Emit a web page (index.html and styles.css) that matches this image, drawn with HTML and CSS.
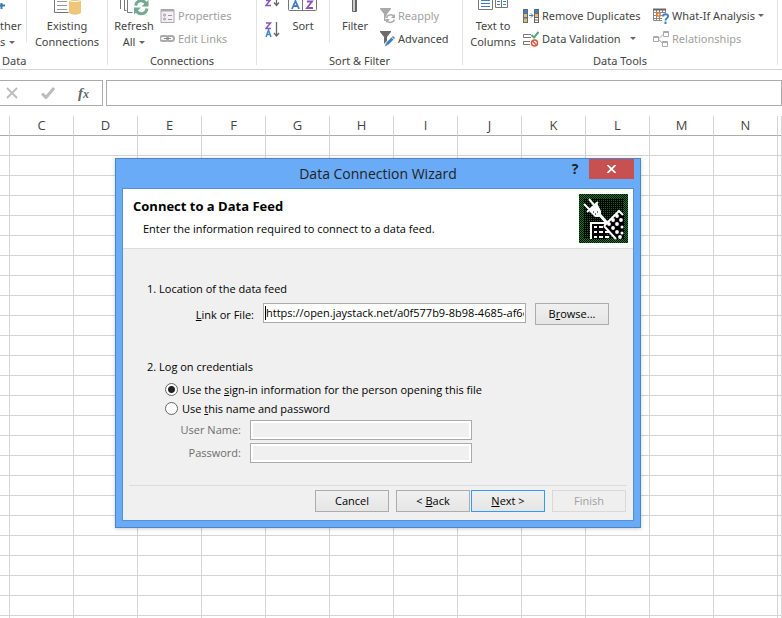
FILE: index.html
```html
<!DOCTYPE html>
<html lang="en">
<head>
<meta charset="utf-8">
<title>Data Connection Wizard</title>
<link rel="stylesheet" href="styles.css">
</head>
<body>
<div class="ribbon">
  <section class="group group-get">
    <div class="tools">
      <button class="big big-cut">
        <svg class="icon-top" width="24" height="18" viewBox="0 0 24 18"><path d="M0 5.500h5M1.500 3v6" stroke="#3f76b5" stroke-width="2"/></svg>
        <span>ther</span><span>s<i class="caret"></i></span>
      </button>
      <div class="divider"></div>
      <button class="big big-existing">
        <svg class="icon-top" width="28" height="18" viewBox="0 0 28 18"><path d="M1.500 0v12.500h14" fill="none" stroke="#777"/><path d="M4 1.500h10M4 5.500h10M4 9.500h10" stroke="#999"/><path d="M16 0h12v12c0 3.500-12 3.500-12 0z" fill="#edc67c"/><path d="M16 0c2 2 10 2 12 0" fill="none" stroke="#fff"/></svg>
        <span>Existing</span><span>Connections</span>
      </button>
    </div>
    <h2>Data</h2>
  </section>
  <section class="group group-connections">
    <div class="tools">
      <button class="big big-refresh">
        <svg class="icon-top" width="30" height="18" viewBox="0 0 30 18"><path d="M1.500 0v9M5.500 0v10.500h2M8.500 0v12.500h5" fill="none" stroke="#777"/><path d="M16.500 5.500c1-5 8-7 11-1M28 8.500c-1 6-8 7-11 2" fill="none" stroke="#73a893" stroke-width="3"/><path d="M29.500 0v6.500h-7zM15 14.500v-7h7z" fill="#73a893"/></svg>
        <span>Refresh</span><span>All<i class="caret"></i></span>
      </button>
      <div class="stack">
        <button class="small" disabled>
          <svg width="15" height="16" viewBox="0 0 15 16"><path d="M1 1.500h13v13h-13z" fill="#f3f0f3" stroke="#aaa"/><path d="M1 2.500h13" stroke="#aaa" stroke-width="2"/><circle cx="4.500" cy="7" r="1" fill="none" stroke="#999"/><circle cx="4.500" cy="11" r="1" fill="none" stroke="#999"/><path d="M8 7.500h4M8 11.500h4" stroke="#999"/></svg>
          Properties</button>
        <button class="small" disabled>
          <svg width="15" height="16" viewBox="0 0 15 16"><rect x="0" y="5" width="8" height="5" rx="2.500" fill="none" stroke="#aaa" stroke-width="2"/><rect x="7" y="5" width="7" height="5" rx="2.500" fill="none" stroke="#aaa" stroke-width="2"/><path d="M4 7.500h7" stroke="#888"/></svg>
          Edit Links</button>
      </div>
    </div>
    <h2>Connections</h2>
  </section>
  <section class="group group-sort">
    <div class="tools">
      <button class="orders" aria-label="Sort order">
        <svg width="16" height="42" viewBox="0 0 16 42"><path d="M1 0.500h4L1 5.500h5M1 23h4.500L1 28.500h5" fill="none" stroke="#8e55b5" stroke-width="1.500"/><path d="M1 37l2.500-7 2.500 7M2 34.500h3" fill="none" stroke="#3f8acb" stroke-width="1.500"/><path d="M11.500 0v5M9 2.500l2.500 3 2.500-3M11.500 22v14M9 33l2.500 3 2.500-3" fill="none" stroke="#666" stroke-width="1.300"/></svg>
      </button>
      <button class="big big-sort">
        <svg class="icon-top" width="30" height="18" viewBox="0 0 30 18"><path d="M.5 0v9.500q0 1 1 1h26q1 0 1-1V0M14.500 0v10" fill="none" stroke="#777"/><path d="M4 9l3.500-8 3.500 8M5 6h5" fill="none" stroke="#3f7fc0" stroke-width="1.800"/><path d="M19 1.500h5L19 8h6" fill="none" stroke="#8e55b5" stroke-width="1.800"/></svg>
        <span>Sort</span>
      </button>
      <div class="divider"></div>
      <button class="big big-filter">
        <svg class="icon-top" width="6" height="18" viewBox="0 0 6 18"><path d="M.5 0v11.500h4V0" fill="#ccc" stroke="#666"/><path d="M4 0v11" stroke="#666" stroke-width="2"/></svg>
        <span>Filter</span>
      </button>
      <div class="stack">
        <button class="small" disabled>
          <svg width="15" height="16" viewBox="0 0 15 16"><path d="M0 0h11v1L7 6v7H4V6L0 1z" fill="#aaa"/><circle cx="10.500" cy="10.500" r="5" fill="#fff"/><path d="M6.500 10c1-4 6-4 8-1M14.500 11.500c-1 3-5 4-7.500 1.500" fill="none" stroke="#aaa" stroke-width="1.500"/><path d="M15 6v4h-4zM6 15v-4h4z" fill="#aaa"/></svg>
          Reapply</button>
        <button class="small">
          <svg width="15" height="16" viewBox="0 0 15 16"><path d="M0 0h11v1L7 6v7H4V6L0 1z" fill="#6b6b6b"/><path d="M6 14.500l8-8.500" stroke="#fff" stroke-width="5"/><path d="M7 13l5.500-5.500" stroke="#3f7fc0" stroke-width="3"/><path d="M13 7l1-1" stroke="#3f7fc0" stroke-width="3"/><path d="M5 15l1-3 2 2z" fill="#3f7fc0"/></svg>
          Advanced</button>
      </div>
    </div>
    <h2>Sort &amp; Filter</h2>
  </section>
  <section class="group group-tools">
    <div class="tools">
      <button class="big big-columns">
        <svg class="icon-top" width="30" height="18" viewBox="0 0 30 18"><path d="M.5 0v9.500h14V0M17.500 0v7.500h12V0M23.500 0v7" fill="none" stroke="#777"/><path d="M3 .5h9M3 3.500h9M3 6.500h9" stroke="#3f7fc0"/><path d="M19 1.500h3M25 1.500h3M19 4.500h3M25 4.500h3" stroke="#3f7fc0"/></svg>
        <span>Text to</span><span>Columns</span>
      </button>
      <div class="stack stack-data">
        <button class="small">
          <svg width="16" height="16" viewBox="0 0 16 16"><path d="M0 1h5v14H0z" fill="#596d83"/><path d="M1 6h3v3H1zM1 10.500h3v3.500H1z" fill="#edbb63"/><path d="M1 2h3v3H1z" fill="#3f7fc0"/><path d="M11 1h5v14h-5z" fill="#666"/><path d="M12 2h3v3h-3z" fill="#3f7fc0"/><path d="M12 6h3v3h-3z" fill="#edbb63"/><path d="M12 10h3v1.500h-3zM12 12.500h3V14h-3z" fill="#fff"/><path d="M6 7.500h4M8 5.500l2 2-2 2" fill="none" stroke="#3f7fc0"/></svg>
          Remove Duplicates</button>
        <button class="small">
          <svg width="16" height="16" viewBox="0 0 16 16"><path d="M8 3.500H.5v3H8M7 10.500H.5v3H7" fill="none" stroke="#777"/><path d="M8.500 4l2.500 2.500L15.500 1" fill="none" stroke="#58a583" stroke-width="2"/><circle cx="11.500" cy="12" r="3" fill="#fff" stroke="#d9583b" stroke-width="1.500"/><path d="M9.500 10l4 4" stroke="#d9583b" stroke-width="1.300"/></svg>
          Data Validation<i class="caret caret-far"></i></button>
      </div>
      <div class="stack">
        <button class="small">
          <svg width="16" height="16" viewBox="0 0 16 16"><path d="M.5 1.500h12v11H.5zM3.500 1v11M6.500 1v11M9.500 1v11M0 4.500h12M0 7.500h12M0 10.500h12" fill="#fff" stroke="#888"/><path d="M0 1.500h13" stroke="#666" stroke-width="2"/><path d="M4 5h3v3H4z" fill="#fff" stroke="#e37e33" stroke-width="1.500"/><path d="M9 5h7v11H9z" fill="#fff"/><path d="M10 8.500c0-3 5.500-3 5 0 0 2-2.500 1.500-2.500 4M12.500 13.500V16" fill="none" stroke="#3f7fc0" stroke-width="2"/></svg>
          What-If Analysis<i class="caret caret-near"></i></button>
        <button class="small" disabled>
          <svg width="16" height="16" viewBox="0 0 16 16"><path d="M.5 5.500h5v5h-5zM10.500.5h5v5h-5zM9.500 10.500h5v5h-5zM6 7.500l4-4M6 8.500l3.500 4" fill="none" stroke="#aaa"/><path d="M0 6.500h6M10 1.500h6M9 11.500h6" stroke="#aaa"/></svg>
          Relationships</button>
      </div>
    </div>
    <h2>Data Tools</h2>
  </section>
</div>

<div class="formula-bar">
  <div class="formula-actions">
    <button aria-label="Cancel entry"><svg width="12" height="12" viewBox="0 0 12 12"><path d="M1 1l10 10M11 1L1 11" stroke="#bdbdbd" stroke-width="2"/></svg></button>
    <button aria-label="Enter"><svg width="14" height="12" viewBox="0 0 14 12"><path d="M1 6.500l4 4L13 1" fill="none" stroke="#bdbdbd" stroke-width="3"/></svg></button>
    <button class="fx" aria-label="Insert function">f<small>x</small></button>
  </div>
  <input class="formula-input" type="text" aria-label="Formula">
</div>

<table class="sheet">
  <thead>
    <tr><th class="edge"></th><th>C</th><th>D</th><th>E</th><th>F</th><th>G</th><th>H</th><th>I</th><th>J</th><th>K</th><th>L</th><th>M</th><th>N</th><th class="rest"></th></tr>
  </thead>
  <tbody id="rows"></tbody>
</table>

<div class="dialog" role="dialog" aria-labelledby="dialog-title">
  <header class="titlebar">
    <h1 id="dialog-title">Data Connection Wizard</h1>
    <div class="window-buttons">
      <button class="help" aria-label="Help">?</button>
      <button class="close" aria-label="Close"><svg width="9" height="8" viewBox="0 0 9 8"><path d="M.5 0l8 8M8.500 0l-8 8" stroke="#fff" stroke-width="1.700"/></svg></button>
    </div>
  </header>
  <form class="panel">
    <div class="intro">
      <div>
        <h2>Connect to a Data Feed</h2>
        <p>Enter the information required to connect to a data feed.</p>
      </div>
      <svg class="feed-icon" width="49" height="49" viewBox="0 0 49 49">
        <defs>
          <pattern id="dense" width="2" height="2" patternUnits="userSpaceOnUse"><path d="M0 0h2v2H0z" fill="#000"/><path d="M0 0h1v1H0zM1 1h1v1H1z" fill="#0a7a1c"/></pattern>
          <pattern id="sparse" width="2" height="2" patternUnits="userSpaceOnUse"><path d="M0 0h2v2H0z" fill="#000"/><path d="M0 0h1v1H0z" fill="#08621a"/></pattern>
        </defs>
        <path d="M0 0h49v49H0z" fill="url(#dense)"/>
        <path d="M5 5h39v40H5z" fill="url(#sparse)"/>
        <path d="M12 29h15v16H12z" fill="#000"/>
        <path d="M11 45V28h17v2H13v15z" fill="#fff"/>
        <path d="M15 32h3v2h-3zM20 32h4v2h-4zM15 37h3v2h-3zM20 37h4v2h-4zM26 37h4v2h-4zM15 42h3v2h-3zM20 42h4v2h-4zM26 42h4v2h-4z" fill="#fff"/>
        <path d="M25 31l15-14 5 4v24h-8z" fill="#000"/>
        <path d="M25 32L40 17l4 4M25 32l12 13" fill="none" stroke="#fff" stroke-width="2"/>
        <g fill="#fff"><circle cx="38" cy="22" r="1.900"/><circle cx="42" cy="26" r="1.900"/><circle cx="34" cy="26" r="1.900"/><circle cx="38" cy="30" r="1.900"/><circle cx="43" cy="33" r="1.500"/><circle cx="30" cy="30" r="1.900"/><circle cx="34" cy="34" r="1.900"/><circle cx="38" cy="38" r="1.900"/><circle cx="43" cy="39" r="1.500"/><circle cx="41" cy="43" r="1.900"/></g>
        <path d="M10 5l5 6M5 10l6 6M8 18L19 8" fill="none" stroke="#fff" stroke-width="2"/>
        <path d="M10 17l8-8 4 8v4l-2 2h-4z" fill="#fff"/>
        <path d="M20 20l8 9" fill="none" stroke="#fff" stroke-width="3"/>
        <path d="M14 18h1M16 20h1M18 18h1" stroke="#000"/>
      </svg>
    </div>
    <div class="content">
      <h3>1. Location of the data feed</h3>
      <div class="location">
        <label for="link"><u>L</u>ink or File:</label>
        <div class="link-box"><span class="text-caret"></span><input id="link" type="text" value="https://open.jaystack.net/a0f577b9-8b98-4685-af6e-2f5d"></div>
        <button type="button" class="push">B<u>r</u>owse...</button>
      </div>
      <h3 class="second">2. Log on credentials</h3>
      <label class="choice"><input type="radio" name="login" checked><span>Use the <u>s</u>ign-in information for the person opening this file</span></label>
      <label class="choice"><input type="radio" name="login"><span>Use <u>t</u>his name and password</span></label>
      <div class="credentials">
        <label for="user">User Name:</label><input id="user" type="text" disabled>
        <label for="pass">Password:</label><input id="pass" type="password" disabled>
      </div>
      <footer class="actions">
        <button type="button" class="push">Cancel</button>
        <div class="steps">
          <button type="button" class="push">&lt; <u>B</u>ack</button>
          <button type="button" class="push primary"><u>N</u>ext &gt;</button>
        </div>
        <button type="button" class="push" disabled>Finish</button>
      </footer>
    </div>
  </form>
</div>
<script src="sheet.js"></script>
</body>
</html>
```
FILE: styles.css
```css
* { box-sizing: border-box; }

body {
  margin: 0;
  min-height: 100vh;
  overflow: hidden;
  position: relative;
  background: #fff;
  color: #444;
  font: 11px/16px "Open Sans", "Noto Sans", sans-serif;
}

button, input { font: inherit; color: inherit; margin: 0; }
h1, h2, h3, p { margin: 0; font-size: inherit; font-weight: normal; }
svg { display: block; flex: none; }

/* Ribbon */
.ribbon {
  display: flex;
  height: 70px;
  border-bottom: 1px solid #d4d4d4;
  font-family: "Noto Sans", "Open Sans", sans-serif;
}
.ribbon button {
  border: 0;
  padding: 0;
  background: none;
  white-space: nowrap;
}
.ribbon button:disabled { color: #a0a0a0; }
.group {
  flex: none;
  height: 65px;
  border-right: 1px solid #e1e1e1;
}
.group-get { width: 108px; }
.group-connections { width: 149px; }
.group-sort { width: 206px; }
.group-tools { width: 315px; }
.group h2 { text-align: center; line-height: 16px; margin-top: 3px; }
.group-get h2 { text-align: left; padding-left: 2px; }
.tools { display: flex; height: 50px; }
.divider { width: 1px; height: 42px; background: #e1e1e1; }

.big {
  display: flex;
  flex-direction: column;
  align-items: center;
}
.icon-top { height: 18px; }
.big-cut { width: 26px; align-items: flex-start; }
.big-existing { width: 80px; }
.big-refresh { width: 52px; }
.big-sort { width: 44px; margin-right: 4px !important; }
.big-filter { width: 50px; }
.big-columns { width: 60px; }
.orders { width: 24px; padding-left: 8px !important; align-self: flex-start; }

.caret {
  display: inline-block;
  margin-left: 4px;
  vertical-align: 2px;
  border: 3px solid transparent;
  border-top-color: #666;
  border-bottom: 0;
}
.caret-far { margin-left: 6px; }
.caret-near { margin-left: 0; }

.stack { display: flex; flex-direction: column; padding-top: 4px; }
.stack-data { width: 130px; }
.small {
  display: flex;
  align-items: center;
  gap: 3px;
  height: 23px;
}

/* Formula bar */
.formula-bar { display: flex; gap: 3px; margin-top: 10px; height: 26px; }
.formula-actions {
  display: flex;
  align-items: center;
  gap: 23px;
  width: 103px;
  padding-left: 6px;
  border: 1px solid #ababab;
  border-left: 0;
}
.formula-actions button { border: 0; padding: 0; background: none; }
.formula-actions .fx {
  font: italic bold 15px/20px "Liberation Serif", serif;
  color: #666;
}
.fx small { font-size: 12px; }
.formula-input { flex: 1; min-width: 0; border: 1px solid #ababab; }

/* Sheet */
.sheet {
  width: 100%;
  margin-top: 10px;
  table-layout: fixed;
  border-collapse: separate;
  border-spacing: 0;
}
.sheet th, .sheet td { padding: 0; height: 20px; border-right: 1px solid #d4d4d4; }
.sheet th {
  width: 64px;
  border-bottom: 1px solid #ababab;
  font-size: 13px;
  line-height: 19px;
  font-weight: normal;
}
.sheet td { border-bottom: 1px solid #d4d4d4; }
.sheet .edge { width: 10px; }
.sheet .rest { width: auto; }

/* Wizard window */
.dialog {
  position: absolute;
  left: 115px;
  top: 158px;
  width: 526px;
  padding: 0 6px 6px;
  border: 1px solid #4c84c4;
  background: #6aabf7;
  box-shadow: 0 1px 4px rgba(0, 0, 0, .2);
  color: #000;
}
.titlebar { position: relative; height: 29px; }
.titlebar h1 {
  text-align: center;
  font-size: 14px;
  line-height: 29px;
  color: #222;
}
.window-buttons { position: absolute; top: 0; right: 0; display: flex; }
.window-buttons button { height: 20px; border: 0; padding: 0; background: none; }
.help { width: 28px; font-size: 14px; line-height: 20px; font-weight: bold; color: #222; }
.window-buttons .help { font-size: 14px; font-weight: bold; }
.window-buttons .close {
  display: flex;
  align-items: center;
  justify-content: center;
  width: 45px;
  background: #c75050;
}
.panel { border: 1px solid #5590d8; background: #f0f0f0; }
.intro {
  display: flex;
  justify-content: space-between;
  height: 60px;
  padding: 5px 5px 5px 10px;
  border-bottom: 1px solid #dcdcdc;
  background: #fff;
}
.intro h2 { font-size: 13px; line-height: 24px; font-weight: bold; }
.intro p { padding-left: 10px; line-height: 22px; }

.content { padding: 32px 6px 8px; }
.content h3 { padding-left: 18px; line-height: 16px; }
.location {
  display: flex;
  align-items: flex-start;
  padding-top: 6px;
}
.location label { width: 125px; text-align: right; line-height: 24px; }
.link-box {
  display: flex;
  align-items: center;
  width: 263px;
  height: 20px;
  margin: 0 9px;
  padding: 0 1px;
  border: 1px solid #ababab;
  background: #fff;
}
.link-box input { flex: 1; min-width: 0; border: 0; padding: 0; background: none; outline: 0; }
.text-caret { width: 1px; height: 14px; background: #000; }
.push {
  width: 74px;
  height: 22px;
  padding: 0;
  border: 1px solid #acacac;
  background: linear-gradient(#f0f0f0, #e5e5e5);
  line-height: 20px;
}
.push.primary { border-color: #3399ff; }
.push:disabled { border-color: #d9d9d9; background: #efefef; color: #a0a0a0; }
.content .second { padding-top: 32px; }
.second + .choice { margin-top: 5px; }
.choice {
  display: flex;
  align-items: center;
  gap: 4px;
  height: 19px;
  padding-left: 36px;
}
.choice input {
  appearance: none;
  width: 13px;
  height: 13px;
  border: 1px solid #666;
  border-radius: 50%;
  background: #fff;
}
.choice input:checked { background: radial-gradient(circle, #222 3px, #fff 4px); }
.credentials {
  display: grid;
  grid-template-columns: 112px 222px;
  gap: 3px 9px;
  margin-top: 2px;
  color: #6d6d6d;
}
.credentials label { text-align: right; line-height: 20px; }
.credentials input {
  height: 20px;
  padding: 0;
  border: 1px solid #ababab;
  background: #f0f0f0;
  box-shadow: inset 0 0 0 2px #fff;
}
.actions {
  display: flex;
  justify-content: flex-end;
  gap: 7px;
  margin-top: 22px;
  padding: 4px 1px 0 0;
  border-top: 1px solid #dcdcdc;
}
.steps { display: flex; gap: 1px; }
```
FILE: sheet.js
```js
const columns = document.querySelectorAll(".sheet th").length;
const body = document.getElementById("rows");
for (let r = 0; r < 25; r++) {
  const row = body.insertRow();
  for (let c = 0; c < columns; c++) row.insertCell();
}
```
